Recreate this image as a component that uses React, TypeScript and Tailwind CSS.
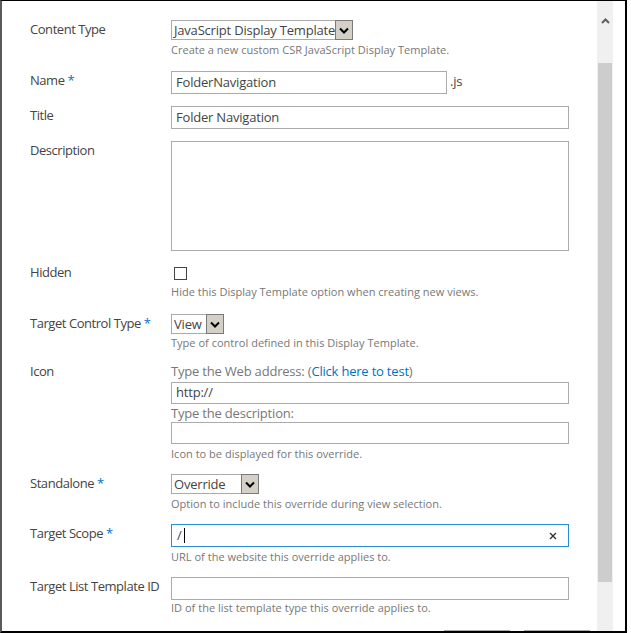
import React from "react";

function Label({ children, req }: { children: React.ReactNode; req?: boolean }) {
  return (
    <div className="w-[141px] shrink-0 text-[13px] leading-[18px] tracking-[-0.45px] text-[#444] whitespace-nowrap">
      {children}
      {req && <span className="text-[#0072c6]"> *</span>}
    </div>
  );
}

function Desc({ children, mt = "mt-[2px]" }: { children: React.ReactNode; mt?: string }) {
  return (
    <div className={`${mt} text-[11px] leading-[16px] tracking-[0.02px] text-[#777] whitespace-nowrap`}>{children}</div>
  );
}

function Chevron() {
  return (
    <svg width="10" height="7" viewBox="0 0 10 7">
      <polyline points="1,1.5 5,5.5 9,1.5" fill="none" stroke="#000" strokeWidth="2" />
    </svg>
  );
}

function Select({ value, w }: { value: string; w: string }) {
  return (
    <div className={`flex h-[20px] ${w}`}>
      <div className="flex-1 border-y border-l border-[#ababab] pl-[2px] text-[13px] leading-[18px] text-[#444] whitespace-nowrap overflow-hidden">
        {value}
      </div>
      <div className="flex h-[20px] w-[18px] items-center justify-center border border-[#7a7a7a] bg-[#d4d0c8]">
        <Chevron />
      </div>
    </div>
  );
}

function Input({ value, w = "w-[398px]", h = "h-[23px]" }: { value?: string; w?: string; h?: string }) {
  return (
    <div className={`${h} ${w} flex items-center border border-[#ababab] bg-white px-[4px] text-[13px] text-[#444] whitespace-nowrap`}>
      {value}
    </div>
  );
}

export default function App() {
  return (
    <div className="w-[631px] h-[633px] bg-white overflow-hidden font-['Open_Sans','Noto_Sans',sans-serif]">
      <div className="flex w-[627px] h-[633px] border-t border-t-black border-l-2 border-l-[#5a5a5a] border-r-2 border-r-black border-b-2 border-b-black">
        {/* content */}
        <div className="w-[595px] h-full overflow-hidden pl-[28px] pt-[19px] tracking-[-0.2px]">
          {/* Content Type */}
          <div className="flex items-start">
            <Label>Content Type</Label>
            <div>
              <Select value="JavaScript Display Template" w="w-[182px]" />
              <Desc>Create a new custom CSR JavaScript Display Template.</Desc>
            </div>
          </div>

          {/* Name */}
          <div className="mt-[13px] flex items-start">
            <Label req>Name</Label>
            <div className="flex items-start">
              <Input value="FolderNavigation" w="w-[276px]" />
              <span className="ml-[3px] mt-[1px] text-[13px] leading-[18px] text-[#444]">.js</span>
            </div>
          </div>

          {/* Title */}
          <div className="mt-[12px] flex items-start">
            <Label>Title</Label>
            <Input value="Folder Navigation" />
          </div>

          {/* Description */}
          <div className="mt-[12px] flex items-start">
            <Label>Description</Label>
            <div className="h-[110px] w-[398px] border border-[#ababab] bg-white" />
          </div>

          {/* Hidden */}
          <div className="mt-[12px] flex items-start">
            <Label>Hidden</Label>
            <div>
              <div className="ml-[3px] mt-[4px] h-[13px] w-[13px] border border-[#444] bg-white" />
              <Desc mt="mt-[4px]">Hide this Display Template option when creating new views.</Desc>
            </div>
          </div>

          {/* Target Control Type */}
          <div className="mt-[14px] flex items-start">
            <Label req>Target Control Type</Label>
            <div>
              <Select value="View" w="w-[53px]" />
              <Desc mt="mt-[1px]">Type of control defined in this Display Template.</Desc>
            </div>
          </div>

          {/* Icon */}
          <div className="mt-[11px] flex items-start">
            <Label>Icon</Label>
            <div>
              <div className="text-[13px] leading-[18px] text-[#777] whitespace-nowrap">
                Type the Web address: (<span className="text-[#0072c6]">Click here to test</span>)
              </div>
              <div className="mt-[2px]">
                <Input value="http://" h="h-[22px]" />
              </div>
              <div className="text-[13px] leading-[18px] text-[#777]">Type the description:</div>
              <Input h="h-[22px]" />
              <Desc>Icon to be displayed for this override.</Desc>
            </div>
          </div>

          {/* Standalone */}
          <div className="mt-[12px] flex items-start">
            <Label req>Standalone</Label>
            <div>
              <Select value="Override" w="w-[88px]" />
              <Desc>Option to include this override during view selection.</Desc>
            </div>
          </div>

          {/* Target Scope */}
          <div className="mt-[12px] flex items-start">
            <Label req>Target Scope</Label>
            <div>
              <div className="flex h-[23px] w-[398px] items-center border border-[#2a8dd4] bg-white pl-[5px] pr-[11px] text-[13px] text-[#444]">
                <span>/</span>
                <span className="ml-[2px] inline-block h-[15px] w-[1px] bg-black" />
                <span className="flex-1" />
                <svg width="8" height="8" viewBox="0 0 8 8">
                  <path d="M1 1 L7 7 M7 1 L1 7" stroke="#333" strokeWidth="1.4" />
                </svg>
              </div>
              <Desc>URL of the website this override applies to.</Desc>
            </div>
          </div>

          {/* Target List Template ID */}
          <div className="mt-[12px] flex items-start">
            <Label>Target List Template ID</Label>
            <div>
              <Input />
              <Desc mt="mt-[0px]">ID of the list template type this override applies to.</Desc>
            </div>
          </div>

          {/* buttons (cut off) */}
          <div className="mt-[14px] flex justify-end gap-[14px] pr-[7px]">
            <div className="h-[24px] w-[66px] border border-[#ababab] bg-[#fdfdfd]" />
            <div className="h-[24px] w-[66px] border border-[#ababab] bg-[#fdfdfd]" />
          </div>
        </div>

        {/* scrollbar */}
        <div className="flex w-[16px] h-full flex-col bg-[#f0f0f0]">
          <div className="flex h-[62px] justify-center pt-[17px]">
            <svg width="9" height="6" viewBox="0 0 9 6">
              <polyline points="1,5 4.5,1.5 8,5" fill="none" stroke="#5f5f5f" strokeWidth="2" />
            </svg>
          </div>
          <div className="ml-[1px] h-[519px] w-[14px] bg-[#cdcdcd]" />
        </div>
        <div className="w-[12px] h-full bg-white" />
      </div>
    </div>
  );
}
